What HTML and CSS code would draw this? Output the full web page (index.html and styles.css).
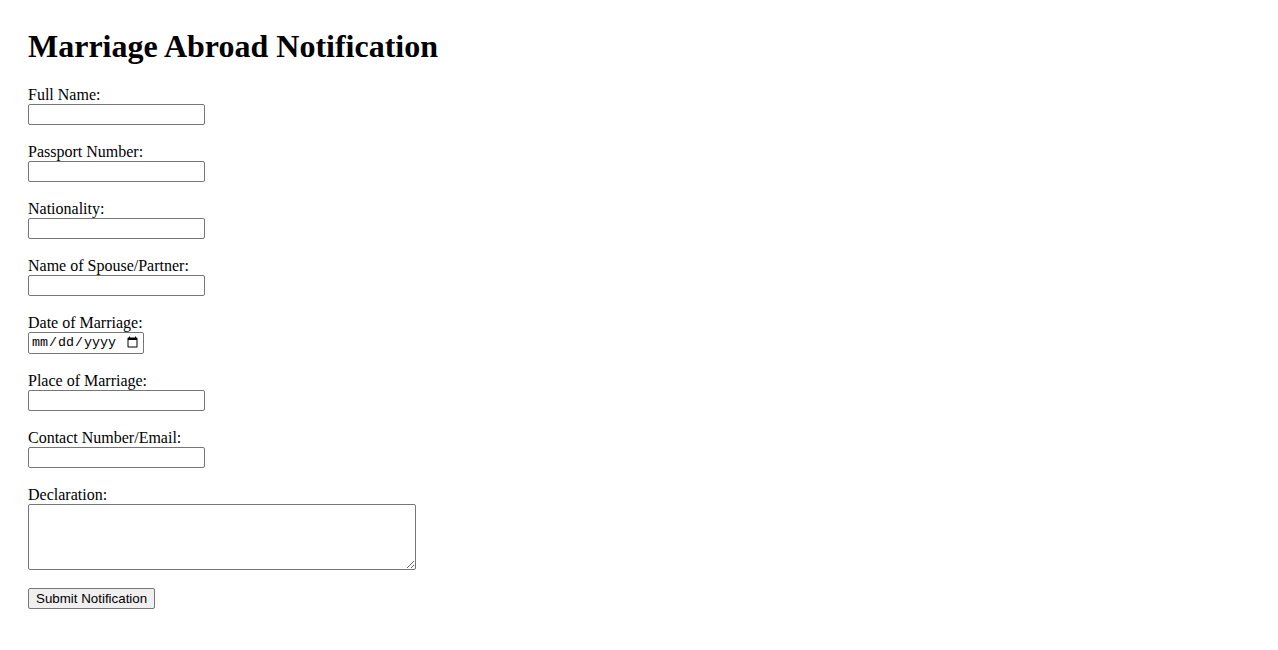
FILE: index.html
```html
<!DOCTYPE html>
<html lang="en">
<head>
<meta charset="utf-8">
<title>Marriage Abroad Notification</title>
<link rel="stylesheet" href="styles.css">
</head>
<body>
<main class="page">
  <h1 class="title">Marriage Abroad Notification</h1>
  <form class="form">
    <div class="field">
      <label class="label" for="name">Full Name:</label>
      <input class="input" type="text" id="name">
    </div>
    <div class="field">
      <label class="label" for="passport">Passport Number:</label>
      <input class="input" type="text" id="passport">
    </div>
    <div class="field">
      <label class="label" for="nationality">Nationality:</label>
      <input class="input" type="text" id="nationality">
    </div>
    <div class="field">
      <label class="label" for="spouse">Name of Spouse/Partner:</label>
      <input class="input" type="text" id="spouse">
    </div>
    <div class="field">
      <label class="label" for="date">Date of Marriage:</label>
      <input class="input date" type="date" id="date">
    </div>
    <div class="field">
      <label class="label" for="place">Place of Marriage:</label>
      <input class="input" type="text" id="place">
    </div>
    <div class="field">
      <label class="label" for="contact">Contact Number/Email:</label>
      <input class="input" type="text" id="contact">
    </div>
    <div class="field">
      <label class="label" for="declaration">Declaration:</label>
      <textarea class="textarea" id="declaration"></textarea>
    </div>
    <div class="field">
      <button class="button" type="submit">Submit Notification</button>
    </div>
  </form>
</main>
</body>
</html>
```
FILE: styles.css
```css
html, body {
  margin: 0;
  padding: 0;
  background: #fff;
}
body {
  font-family: "Liberation Serif", "Times New Roman", serif;
  font-size: 16px;
  color: #000;
}
.page {
  padding: 28px;
}
.title {
  margin: 0 0 21px 0;
  font-size: 32px;
  font-weight: bold;
  line-height: 37px;
}
.form {
  margin: 0;
}
.field {
  margin-bottom: 18px;
}
.label {
  display: block;
  line-height: 18px;
}
.input {
  display: block;
  box-sizing: border-box;
  width: 177px;
  height: 21px;
  margin: 0;
  padding: 1px 2px;
  border: 1px solid #767676;
  border-radius: 2px;
  font-family: "Liberation Sans", Arial, sans-serif;
  font-size: 13.33px;
  background: #fff;
}
.date {
  width: 116px;
  height: 22px;
  font-family: "Liberation Mono", "Courier New", monospace;
  font-size: 13.33px;
  padding: 1px 2px;
}
.textarea {
  display: block;
  box-sizing: border-box;
  width: 388px;
  height: 66px;
  margin: 0;
  border: 1px solid #767676;
  border-radius: 2px;
  font-family: "Liberation Mono", monospace;
  font-size: 13.33px;
}
.button {
  display: block;
  box-sizing: border-box;
  height: 21px;
  margin: 0;
  padding: 1px 7px;
  border: 1px solid #767676;
  border-radius: 2px;
  background: #efefef;
  font-family: "Liberation Sans", Arial, sans-serif;
  font-size: 13.33px;
  white-space: nowrap;
  color: #000;
}
```
